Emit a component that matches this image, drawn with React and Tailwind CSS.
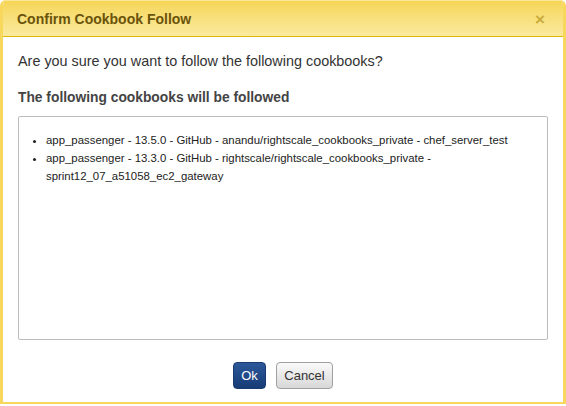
export default function App() {
  return (
    <div className="w-[566px] h-[406px] bg-white">
      <div className="h-[404px] flex flex-col rounded-t-[6px] border-x-[3px] border-b-[2px] border-[#f7d85c] bg-white overflow-hidden font-['Liberation_Sans',Arial,sans-serif]">
        <div className="h-[37px] shrink-0 flex items-center justify-between px-[14px] pt-[3px] bg-gradient-to-b from-[#f6d553] to-[#faea9e] border-b border-[#dcb70a] shadow-[inset_0_1px_0_#fbe79a]">
          <span className="text-[14px] font-bold text-[#6b530a]">Confirm Cookbook Follow</span>
          <span className="text-[17px] font-bold text-[#c9ab3c] leading-none mr-[4px]">×</span>
        </div>
        <div className="flex-1 flex flex-col px-[15px]">
          <p className="mt-[16px] text-[14.4px] leading-[17px] text-[#333]">Are you sure you want to follow the following cookbooks?</p>
          <p className="mt-[19px] text-[13.8px] leading-[17px] font-bold text-[#444]">The following cookbooks will be followed</p>
          <div className="mt-[10px] h-[224px] border border-[#bdbdbd] rounded-[2px] pt-[14px] pl-[27px] pr-[8px]">
            <ul className="list-disc text-[11.4px] leading-[18px] text-[#222]">
              <li>app_passenger - 13.5.0 - GitHub - anandu/rightscale_cookbooks_private - chef_server_test</li>
              <li>app_passenger - 13.3.0 - GitHub - rightscale/rightscale_cookbooks_private - sprint12_07_a51058_ec2_gateway</li>
            </ul>
          </div>
          <div className="mt-[22px] flex justify-center gap-[10px]">
            <button className="h-[27px] w-[33px] rounded-[4px] border border-[#1a3a70] bg-gradient-to-b from-[#2c5899] to-[#173c77] text-white text-[13px]">Ok</button>
            <button className="h-[27px] w-[57px] rounded-[4px] border border-[#a0a0a0] bg-gradient-to-b from-[#fafafa] to-[#d8d8d8] text-[#333] text-[13px]">Cancel</button>
          </div>
        </div>
      </div>
    </div>
  );
}
